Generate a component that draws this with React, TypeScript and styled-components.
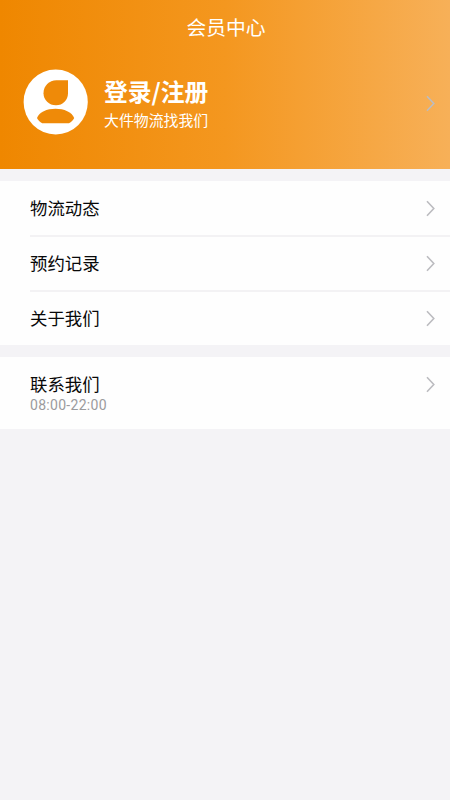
import React from "react";
import styled, { createGlobalStyle } from "styled-components";

const GlobalStyle = createGlobalStyle`
  * { box-sizing: border-box; }
  body {
    margin: 0;
    background: #f4f3f6;
    font-family: "Noto Sans CJK SC", "Noto Sans", sans-serif;
  }
`;

const Page = styled.main`
  display: flex;
  flex-direction: column;
  gap: 12px;
  width: 100%;
  min-height: 800px;
  background: #f4f3f6;
`;

const Header = styled.header`
  height: 169px;
  color: #fff;
  background: linear-gradient(90deg, #ef8700 0%, #f4971f 50%, #f7b058 100%);
`;

const Title = styled.h1`
  margin: 0;
  padding-left: 2px;
  height: 54px;
  line-height: 54px;
  font-size: 19.8px;
  font-weight: 400;
  text-align: center;
`;

const Profile = styled.div`
  display: flex;
  align-items: center;
  height: 98px;
  padding: 0 15px 0 23px;
`;

const ProfileText = styled.div`
  flex: 1;
  margin-left: 16px;
`;

const LoginLabel = styled.div`
  font-size: 23.8px;
  line-height: 32px;
  font-weight: 700;
`;

const Slogan = styled.div`
  font-size: 14.9px;
  line-height: 25px;
`;

const Menu = styled.nav`
  background: #fefefe;
`;

const MenuItem = styled.div<{ $height: number }>`
  display: flex;
  align-items: center;
  justify-content: space-between;
  height: ${(p) => p.$height}px;
  margin-left: 30px;
  padding-right: 15px;
  color: #080808;

  & + & {
    border-top: 2px solid #f3f2f4;
  }
`;

const ItemLabel = styled.div`
  padding-bottom: 1px;
  font-size: 17.4px;
  line-height: 24px;
`;

const Hours = styled.div`
  font-family: Roboto, "Noto Sans CJK SC", sans-serif;
  font-size: 14px;
  line-height: 17px;
  letter-spacing: 0.3px;
  color: #9b9b9d;
`;

const ArrowIcon = styled.svg<{ $raise?: number }>`
  display: block;
  flex: none;
  margin-bottom: ${(p) => p.$raise ?? 0}px;
`;

const Arrow = ({ raise }: { raise?: number }) => (
  <ArrowIcon $raise={raise} width="9" height="17" viewBox="0 0 9 17" fill="none">
    <path d="M1 1.3L7.8 8.5L1 15.7" stroke="#bcbcc0" strokeWidth="1.6" />
  </ArrowIcon>
);

const AvatarIcon = styled.svg`
  display: block;
  flex: none;
  margin-bottom: 2px;
`;

const Avatar = () => (
  <AvatarIcon width="65" height="66" viewBox="0 0 65 66">
    <ellipse cx="32.7" cy="33" rx="32.1" ry="32.4" fill="#fff" />
    <path
      d="M45 11.3V24.2C45 31 39.8 36.3 33 36.3C26 36.3 20.5 31 20.5 24.2C20.5 17 26 11.3 33.5 11.3Z"
      fill="#ef8a08"
    />
    <path
      d="M14 49C16 43 24 39.7 32.5 39.7C41 39.7 49 43 51.2 49C50.3 51 48.2 53 46 54.3H19.2C17 53 14.9 51 14 49Z"
      fill="#ef8a08"
    />
  </AvatarIcon>
);

const rows = [
  { label: "物流动态", height: 54 },
  { label: "预约记录", height: 55 },
  { label: "关于我们", height: 55 },
];

export default function App() {
  return (
    <>
      <GlobalStyle />
      <Page>
        <Header>
          <Title>会员中心</Title>
          <Profile>
            <Avatar />
            <ProfileText>
              <LoginLabel>登录/注册</LoginLabel>
              <Slogan>大件物流找我们</Slogan>
            </ProfileText>
            <Arrow />
          </Profile>
        </Header>
        <Menu>
          {rows.map((row) => (
            <MenuItem key={row.label} $height={row.height}>
              <ItemLabel>{row.label}</ItemLabel>
              <Arrow />
            </MenuItem>
          ))}
        </Menu>
        <Menu>
          <MenuItem $height={72}>
            <div>
              <ItemLabel>联系我们</ItemLabel>
              <Hours>08:00-22:00</Hours>
            </div>
            <Arrow raise={17} />
          </MenuItem>
        </Menu>
      </Page>
    </>
  );
}
